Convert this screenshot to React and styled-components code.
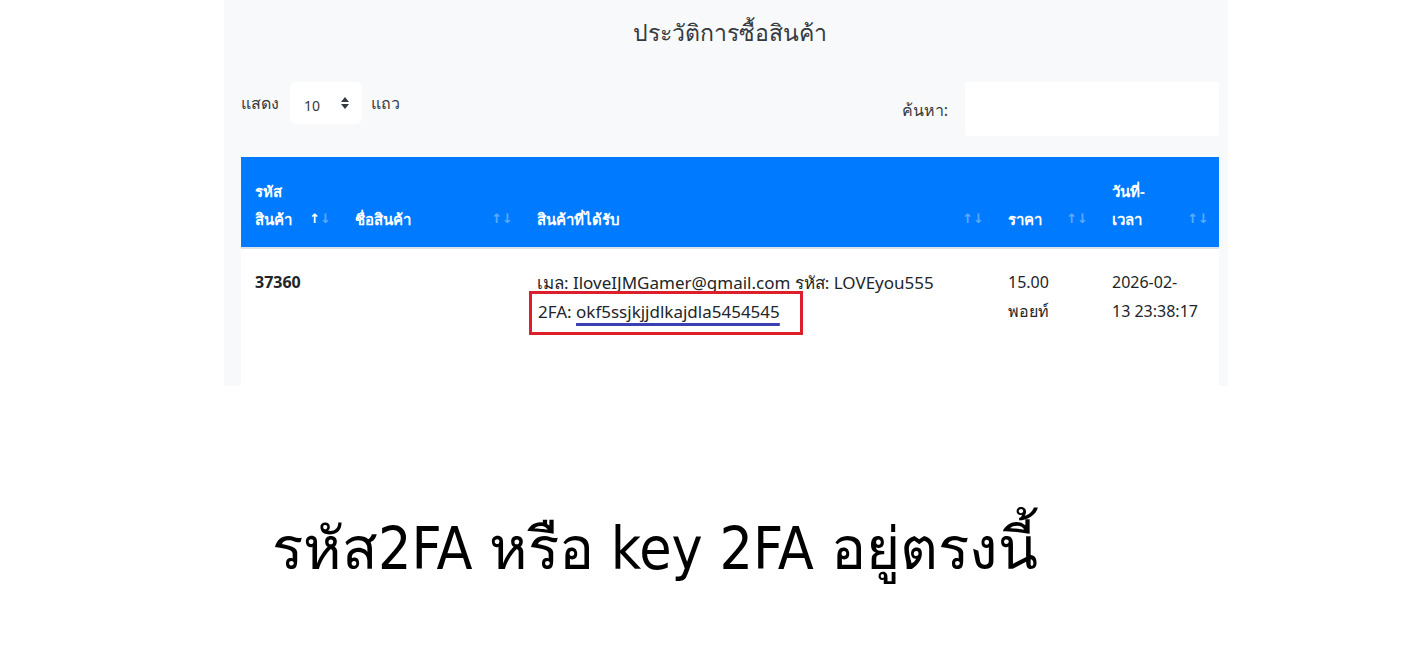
import React from 'react';
import styled, { createGlobalStyle } from 'styled-components';

const GlobalStyle = createGlobalStyle`
  html, body {
    margin: 0;
    padding: 0;
    background: #ffffff;
  }
  body {
    font-family: "Noto Sans", "DejaVu Sans", sans-serif;
    color: #212529;
  }
`;

const Page = styled.div`
  width: 1416px;
  height: 664px;
  background: #ffffff;
  overflow: hidden;
`;

const Panel = styled.div`
  margin-left: 224px;
  width: 1004px;
  height: 386px;
  background: #f8f9fb;
  box-sizing: border-box;
  padding: 0 9px 0 17px;
  display: flex;
  flex-direction: column;
`;

const Title = styled.h2`
  margin: 0;
  padding-top: 13px;
  height: 45px;
  text-align: center;
  font-size: 23px;
  font-weight: 400;
  color: #343a40;
  line-height: 38px;
`;

const Controls = styled.div`
  display: flex;
  justify-content: space-between;
  align-items: flex-start;
  margin-top: 24px;
  height: 75px;
`;

const LengthBox = styled.div`
  display: flex;
  align-items: center;
  gap: 9px;
  font-size: 16px;
  color: #343a40;
  height: 42px;
`;

const Select = styled.div`
  width: 72px;
  height: 42px;
  margin-left: 2px;
  background: #ffffff;
  border-radius: 6px;
  display: flex;
  align-items: center;
  justify-content: space-between;
  padding: 0 12px 0 14px;
  box-sizing: border-box;
  font-size: 14px;
  color: #343a40;
  span {
    padding-top: 5px;
  }
`;

const SearchBox = styled.div`
  display: flex;
  align-items: flex-start;
  gap: 17px;
  font-size: 16px;
  color: #343a40;
  span {
    padding-top: 16px;
  }
`;

const SearchInput = styled.div`
  width: 254px;
  height: 54px;
  background: #ffffff;
  border-radius: 3px;
`;

const Table = styled.div`
  width: 978px;
  display: grid;
  grid-template-columns: 100px 182px 471px 104px 121px;
  flex: 1;
  grid-template-rows: 92px 1fr;
`;

const HeadCell = styled.div`
  background: #007bff;
  color: #ffffff;
  font-weight: 700;
  font-size: 15px;
  line-height: 28px;
  padding: 16px 10px 14px 14px;
  display: flex;
  align-items: flex-end;
  justify-content: space-between;
  border-bottom: 2px solid #dee2e6;
  box-sizing: border-box;
`;

const SortIcon = styled.span`
  display: inline-flex;
  font-size: 13px;
  font-weight: 700;
  line-height: 28px;
  margin-bottom: 1px;
`;

const Arrow = styled.span`
  opacity: ${p => (p.$active ? 1 : 0.35)};
`;

const BodyCell = styled.div`
  background: #ffffff;
  padding: 19px 10px 10px 14px;
  font-size: ${p => (p.$wide ? 17 : 16)}px;
  line-height: 29px;
  font-weight: ${p => (p.$bold ? 700 : 400)};
  color: #212529;
`;

const Highlight = styled.span`
  display: inline-block;
  margin-left: -8px;
  margin-top: -6px;
  padding: 3px 20px 6px 6px;
  border: 3px solid #dc1f2b;
  line-height: 29px;
`;

const Marked = styled.span`
  text-decoration: underline;
  text-decoration-color: #3a3fb3;
  text-decoration-thickness: 3px;
  text-underline-offset: 5px;
`;

const Caption = styled.div`
  margin-top: 128px;
  padding-left: 272px;
  font-family: "DejaVu Sans Condensed", "DejaVu Sans", sans-serif;
  font-size: 58.5px;
  color: #000000;
  line-height: 70px;
`;

const Sort = ({ up }) => (
  <SortIcon>
    <Arrow $active={up}>↑</Arrow>
    <Arrow>↓</Arrow>
  </SortIcon>
);

const headers = [
  { label: <>รหัส<br />สินค้า</>, up: true },
  { label: 'ชื่อสินค้า' },
  { label: 'สินค้าที่ได้รับ' },
  { label: 'ราคา' },
  { label: <>วันที่-<br />เวลา</> },
];

export default function App() {
  return (
    <Page>
      <GlobalStyle />
      <Panel>
        <Title>ประวัติการซื้อสินค้า</Title>
        <Controls>
          <LengthBox>
            แสดง
            <Select>
              <span>10</span>
              <svg width="10" height="14" viewBox="0 0 10 14">
                <path d="M5 1 L9 6 L1 6 Z M5 13 L9 8 L1 8 Z" fill="#343a40" />
              </svg>
            </Select>
            แถว
          </LengthBox>
          <SearchBox>
            <span>ค้นหา:</span>
            <SearchInput />
          </SearchBox>
        </Controls>
        <Table>
          {headers.map((h, i) => (
            <HeadCell key={i}>
              <span>{h.label}</span>
              <Sort up={h.up} />
            </HeadCell>
          ))}
          <BodyCell $bold>37360</BodyCell>
          <BodyCell />
          <BodyCell $wide>
            เมล: IloveIJMGamer@gmail.com รหัส: LOVEyou555
            <br />
            <Highlight>
              2FA: <Marked>okf5ssjkjjdlkajdla5454545</Marked>
            </Highlight>
          </BodyCell>
          <BodyCell>15.00<br />พอยท์</BodyCell>
          <BodyCell>2026-02-<br />13 23:38:17</BodyCell>
        </Table>
      </Panel>
      <Caption>รหัส2FA หรือ key 2FA อยู่ตรงนี้</Caption>
    </Page>
  );
}
